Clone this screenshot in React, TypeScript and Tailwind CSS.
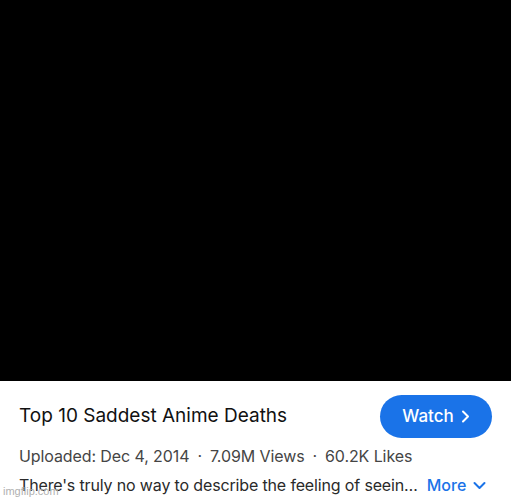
import React from "react";

const ChevronRight = () => (
  <svg width="9" height="13" viewBox="0 0 9 13" fill="none">
    <path d="M2 1.5l5 5-5 5" stroke="currentColor" strokeWidth="2" strokeLinecap="round" strokeLinejoin="round" />
  </svg>
);

const ChevronDown = () => (
  <svg width="13" height="9" viewBox="0 0 13 9" fill="none">
    <path d="M1.5 2l5 5 5-5" stroke="currentColor" strokeWidth="2" strokeLinecap="round" strokeLinejoin="round" />
  </svg>
);

export default function App() {
  return (
    <div className="relative w-[511px] h-[500px] bg-white overflow-hidden font-['Inter',sans-serif]">
      {/* Video area */}
      <div className="h-[381px] bg-black" />

      <div className="px-[19px]">
        <div className="flex items-center justify-between pt-[14px]">
          <h1 className="text-[19px] text-[#111111]">Top 10 Saddest Anime Deaths</h1>
          <button className="flex items-center gap-[7px] h-[43px] w-[112px] justify-center rounded-full bg-[#1a73e8] text-white text-[17px] font-medium">
            Watch
            <ChevronRight />
          </button>
        </div>

        <div className="mt-[6px] flex items-center text-[16px] text-[#454545] leading-[24px] tracking-[-0.1px] whitespace-nowrap">
          <span>Uploaded: Dec 4, 2014</span>
          <span className="mx-[8px]">·</span>
          <span>7.09M Views</span>
          <span className="mx-[8px]">·</span>
          <span>60.2K Likes</span>
        </div>

        <div className="mt-[5px] flex items-center leading-[24px]">
          <p className="whitespace-nowrap text-[16px] text-[#2a2a2a] tracking-[-0.15px]">
            There's truly no way to describe the feeling of seein…
          </p>
          <button className="ml-[9px] flex items-center gap-[7px] text-[16px] font-medium text-[#1a73e8]">
            More
            <ChevronDown />
          </button>
        </div>
      </div>

      {/* watermark */}
      <span className="absolute left-[3px] bottom-[3px] text-[11px] leading-none text-[#b0b0b0] font-['Liberation_Sans',sans-serif]">
        imgflip.com
      </span>
    </div>
  );
}
